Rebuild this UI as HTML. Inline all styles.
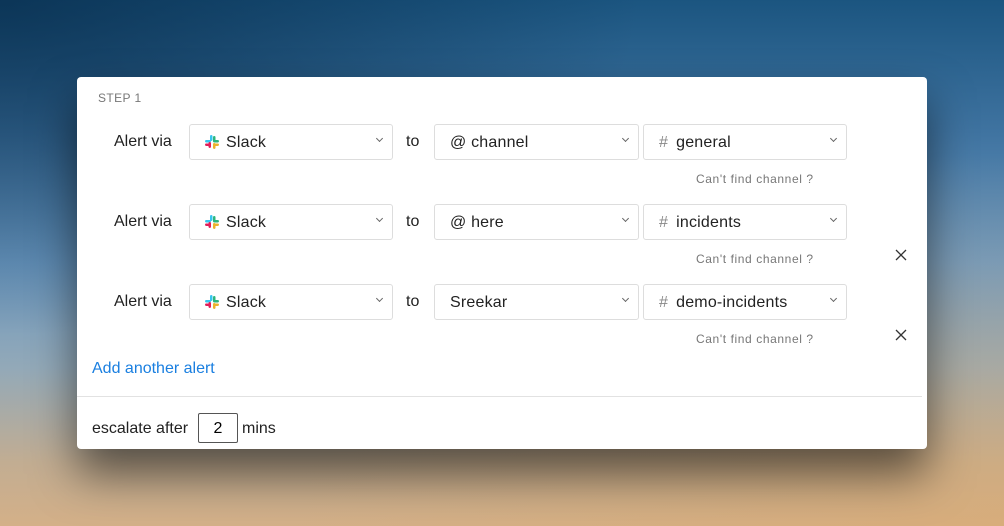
<!DOCTYPE html>
<html><head><style>
*{box-sizing:border-box;margin:0;padding:0}
body{width:1004px;height:526px;overflow:hidden;font-family:"Liberation Sans",sans-serif;position:relative;
background:linear-gradient(180deg,#1b5580 0%,#3f73a0 25%,#6b98c0 50%,#93a9b8 70%,#c2ad92 88%,#d4b088 100%);}
.bg2{position:absolute;inset:0;background:radial-gradient(ellipse at 0% 0%,rgba(5,40,70,.7),rgba(5,40,70,0) 45%),radial-gradient(ellipse at 100% 100%,rgba(220,170,110,.5),rgba(0,0,0,0) 50%)}
.card{position:absolute;left:77px;top:77px;width:850px;height:372px;background:#fff;border-radius:4px;box-shadow:0 25px 45px rgba(0,0,0,.55)}
.step{position:absolute;left:21px;top:14px;font-size:12px;color:#777;letter-spacing:.4px}
.lbl{position:absolute;font-size:16px;color:#222}
.sel{position:absolute;height:36px;border:1px solid #ddd;border-radius:3px;font-size:16px;color:#222;padding:0 0 0 15px;line-height:35px;letter-spacing:.2px}
.sel:after{content:"";position:absolute;right:10px;top:11px;width:4px;height:4px;border-right:1.5px solid #666;border-bottom:1.5px solid #666;transform:rotate(45deg)}
.hash{color:#888;margin-right:8px}
.cf{position:absolute;left:619px;font-size:12px;color:#777;letter-spacing:.6px}
.x{position:absolute;left:818px}
.slk{display:inline-block;vertical-align:-2px;margin-right:7px}
</style></head><body><div class="bg2"></div>
<div class="card">
<div class="step">STEP 1</div>

<div class="lbl" style="left:37px;top:56px">Alert via</div>
<div class="sel" style="left:112px;top:47px;width:204px"><svg class="slk" width="14" height="14" viewBox="0 0 14 14"><rect x="5" y="0" width="2.5" height="6" rx="1.2" fill="#36c5f0"/><rect x="0" y="5" width="6" height="2.5" rx="1.2" fill="#36c5f0"/><rect x="8" y="1" width="2.5" height="6" rx="1.2" fill="#2eb67d"/><rect x="8" y="5" width="6" height="2.5" rx="1.2" fill="#2eb67d"/><rect x="3.5" y="7" width="2.5" height="6" rx="1.2" fill="#e01e5a"/><rect x="0" y="8.5" width="6" height="2.5" rx="1.2" fill="#e01e5a"/><rect x="8" y="8.5" width="6" height="2.5" rx="1.2" fill="#ecb22e"/><rect x="8" y="8" width="2.5" height="6" rx="1.2" fill="#ecb22e"/></svg>Slack</div>
<div class="lbl" style="left:329px;top:56px">to</div>
<div class="sel" style="left:357px;top:47px;width:205px">@ channel</div>
<div class="sel" style="left:566px;top:47px;width:204px"><span class="hash">#</span>general</div>
<div class="cf" style="top:95px">Can't find channel ?</div>

<div class="lbl" style="left:37px;top:136px">Alert via</div>
<div class="sel" style="left:112px;top:127px;width:204px"><svg class="slk" width="14" height="14" viewBox="0 0 14 14"><rect x="5" y="0" width="2.5" height="6" rx="1.2" fill="#36c5f0"/><rect x="0" y="5" width="6" height="2.5" rx="1.2" fill="#36c5f0"/><rect x="8" y="1" width="2.5" height="6" rx="1.2" fill="#2eb67d"/><rect x="8" y="5" width="6" height="2.5" rx="1.2" fill="#2eb67d"/><rect x="3.5" y="7" width="2.5" height="6" rx="1.2" fill="#e01e5a"/><rect x="0" y="8.5" width="6" height="2.5" rx="1.2" fill="#e01e5a"/><rect x="8" y="8.5" width="6" height="2.5" rx="1.2" fill="#ecb22e"/><rect x="8" y="8" width="2.5" height="6" rx="1.2" fill="#ecb22e"/></svg>Slack</div>
<div class="lbl" style="left:329px;top:136px">to</div>
<div class="sel" style="left:357px;top:127px;width:205px">@ here</div>
<div class="sel" style="left:566px;top:127px;width:204px"><span class="hash">#</span>incidents</div>
<div class="cf" style="top:175px">Can't find channel ?</div>
<svg class="x" style="top:172px" width="12" height="12" viewBox="0 0 12 12"><path d="M1 1L11 11M11 1L1 11" stroke="#333" stroke-width="1.3"/></svg>

<div class="lbl" style="left:37px;top:216px">Alert via</div>
<div class="sel" style="left:112px;top:207px;width:204px"><svg class="slk" width="14" height="14" viewBox="0 0 14 14"><rect x="5" y="0" width="2.5" height="6" rx="1.2" fill="#36c5f0"/><rect x="0" y="5" width="6" height="2.5" rx="1.2" fill="#36c5f0"/><rect x="8" y="1" width="2.5" height="6" rx="1.2" fill="#2eb67d"/><rect x="8" y="5" width="6" height="2.5" rx="1.2" fill="#2eb67d"/><rect x="3.5" y="7" width="2.5" height="6" rx="1.2" fill="#e01e5a"/><rect x="0" y="8.5" width="6" height="2.5" rx="1.2" fill="#e01e5a"/><rect x="8" y="8.5" width="6" height="2.5" rx="1.2" fill="#ecb22e"/><rect x="8" y="8" width="2.5" height="6" rx="1.2" fill="#ecb22e"/></svg>Slack</div>
<div class="lbl" style="left:329px;top:216px">to</div>
<div class="sel" style="left:357px;top:207px;width:205px">Sreekar</div>
<div class="sel" style="left:566px;top:207px;width:204px"><span class="hash">#</span>demo-incidents</div>
<div class="cf" style="top:255px">Can't find channel ?</div>
<svg class="x" style="top:252px" width="12" height="12" viewBox="0 0 12 12"><path d="M1 1L11 11M11 1L1 11" stroke="#333" stroke-width="1.3"/></svg>

<div class="lbl" style="left:15px;top:283px;color:#1a7fe0">Add another alert</div>
<div style="position:absolute;left:0;top:319px;width:845px;height:1px;background:#e2e2e2"></div>
<div class="lbl" style="left:15px;top:343px">escalate after</div>
<div style="position:absolute;left:121px;top:336px;width:40px;height:30px;border:1px solid #555;border-radius:2px;text-align:center;line-height:29px;font-size:16px">2</div>
<div class="lbl" style="left:165px;top:343px">mins</div>
</div>
</body></html>
